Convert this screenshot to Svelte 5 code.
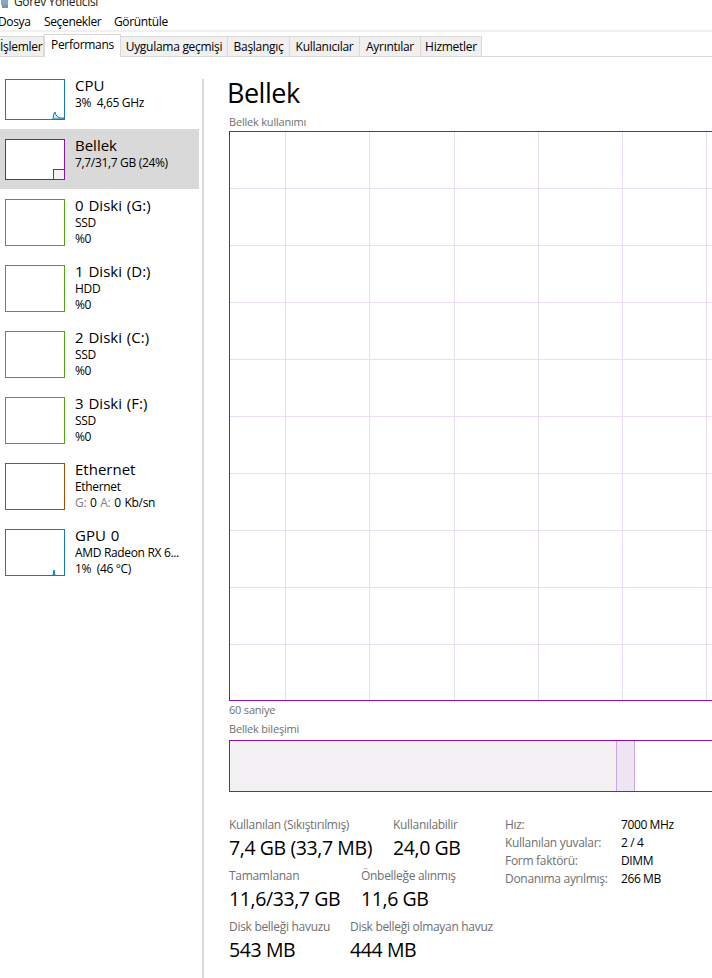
<script>
  const tabs = [
    { label: 'İşlemler', w: 44, first: true },
    { label: 'Performans', w: 77, active: true },
    { label: 'Uygulama geçmişi', w: 107 },
    { label: 'Başlangıç', w: 62 },
    { label: 'Kullanıcılar', w: 70 },
    { label: 'Ayrıntılar', w: 61 },
    { label: 'Hizmetler', w: 61 }
  ];
  const rows = [
    { name: 'CPU', lines: ['3%  4,65 GHz'], color: '#117dbb', kind: 'cpu', h: 'short' },
    { name: 'Bellek', lines: ['7,7/31,7 GB (24%)'], color: '#8b12ae', kind: 'mem', h: 'short', selected: true },
    { name: '0 Diski (G:)', lines: ['SSD', '%0'], color: '#4da60c', h: 'tall' },
    { name: '1 Diski (D:)', lines: ['HDD', '%0'], color: '#4da60c', h: 'tall' },
    { name: '2 Diski (C:)', lines: ['SSD', '%0'], color: '#4da60c', h: 'tall' },
    { name: '3 Diski (F:)', lines: ['SSD', '%0'], color: '#4da60c', h: 'tall' },
    { name: 'Ethernet', lines: ['Ethernet'], net: true, color: '#a74f01', h: 'tall' },
    { name: 'GPU 0', lines: ['AMD Radeon RX 6...', '1%  (46 °C)'], color: '#117dbb', kind: 'gpu', h: 'tall' }
  ];
  const vLines = [56, 140, 225, 309, 393, 477];
  const hLines = [57, 114, 171, 228, 285, 342, 399, 456, 513];
  const specs = [
    ['Hız:', '7000 MHz'],
    ['Kullanılan yuvalar:', '2 / 4'],
    ['Form faktörü:', 'DIMM'],
    ['Donanıma ayrılmış:', '266 MB']
  ];
</script>

<div class="window">
  <div class="titlebar">
    <svg class="appicon" width="8" height="8" viewBox="0 0 8 8"><rect x="0" y="0" width="7" height="5" fill="#7fa8c9"/><rect x="1" y="5" width="6" height="3" fill="#8a8f96"/></svg>
    <span>Görev Yöneticisi</span>
  </div>
  <div class="menu">
    <span class="m1">Dosya</span><span class="m2">Seçenekler</span><span class="m3">Görüntüle</span>
  </div>
  <div class="tabs">
    {#each tabs as t}
      <div class="tab" class:active={t.active} class:first={t.first} style="width:{t.w}px">{t.label}</div>
    {/each}
  </div>
  <div class="content">
    <aside class="side">
      {#each rows as r}
        <div class="row" class:selected={r.selected} class:tall={r.h === 'tall'}>
          <div class="thumb" style="border-color:{r.color}">
            {#if r.kind === 'cpu'}
              <svg class="spark" width="58" height="39" viewBox="0 0 58 39"><path d="M47 39 L48 33 L49 32 L50 35 L52 37 L54 38 L58 38 L58 39 Z" fill="#d2e6f3" stroke="#117dbb" stroke-width="1"/></svg>
            {:else if r.kind === 'mem'}
              <div class="memfill"></div>
            {:else if r.kind === 'gpu'}
              <svg class="spark" width="58" height="45" viewBox="0 0 58 45"><path d="M47 45 L48 40 L49 45 Z" fill="#7db8dc" stroke="#117dbb" stroke-width="1"/></svg>
            {/if}
          </div>
          <div class="info">
            <div class="name">{r.name}</div>
            {#each r.lines as l}<div class="sub">{l}</div>{/each}
            {#if r.net}<div class="sub netline"><span class="grey">G:</span> 0 <span class="grey">A:</span> 0 Kb/sn</div>{/if}
          </div>
        </div>
      {/each}
    </aside>
    <main class="main">
      <h1>Bellek</h1>
      <div class="cap usage">Bellek kullanımı</div>
      <div class="graph">
        <svg width="484" height="568" viewBox="0 0 484 568">
          {#each vLines as x}<line x1={x - 0.5} x2={x - 0.5} y1="0" y2="568" />{/each}
          {#each hLines as y}<line x1="0" x2="484" y1={y - 0.5} y2={y - 0.5} />{/each}
        </svg>
      </div>
      <div class="cap sec">60 saniye</div>
      <div class="cap comp">Bellek bileşimi</div>
      <div class="bar">
        <div class="used"></div>
        <div class="mod"></div>
      </div>
      <div class="stats">
        <div class="left">
          <div class="pair p1">
            <div class="st a"><div class="lb">Kullanılan (Sıkıştırılmış)</div><div class="val">7,4 GB (33,7 MB)</div></div>
            <div class="st"><div class="lb">Kullanılabilir</div><div class="val">24,0 GB</div></div>
          </div>
          <div class="pair p2">
            <div class="st b"><div class="lb">Tamamlanan</div><div class="val">11,6/33,7 GB</div></div>
            <div class="st"><div class="lb">Önbelleğe alınmış</div><div class="val">11,6 GB</div></div>
          </div>
          <div class="pair p3">
            <div class="st c"><div class="lb">Disk belleği havuzu</div><div class="val">543 MB</div></div>
            <div class="st"><div class="lb">Disk belleği olmayan havuz</div><div class="val">444 MB</div></div>
          </div>
        </div>
        <div class="specs">
          {#each specs as s}
            <div class="spec"><span class="k">{s[0]}</span><span class="v">{s[1]}</span></div>
          {/each}
        </div>
      </div>
    </main>
  </div>
</div>

<style>
  :global(body) { margin: 0; background: #fff; }
  .window {
    width: 712px; height: 978px; overflow: hidden; background: #fff; color: #000;
    font-family: "Open Sans", "Noto Sans", sans-serif; font-size: 12px;
  }
  .titlebar { height: 14px; display: flex; gap: 5px; padding-left: 1px; overflow: hidden; }
  .appicon { flex: none; }
  .titlebar span { font-size: 12px; line-height: 16px; margin-top: -6px; color: #222; letter-spacing: -0.35px; }
  .menu {
    height: 16px; line-height: 16px; display: flex; border-bottom: 2px solid #f0f0f0;
    letter-spacing: -0.35px;
  }
  .m1 { margin-left: -2px; width: 46px; }
  .m2 { width: 70px; }
  .tabs {
    margin-top: 2px; height: 23px; display: flex; align-items: flex-end;
    border-bottom: 1px solid #d9d9d9; box-sizing: border-box;
  }
  .tab {
    flex: none; box-sizing: border-box; height: 20px; line-height: 19px; text-align: center;
    background: #f0f0f0; border: 1px solid #d9d9d9; border-left: 0; border-bottom: 0;
    letter-spacing: -0.28px; white-space: nowrap;
  }
  .tab.first { text-align: right; padding-right: 3px; }
  .tab.active {
    height: 23px; background: #fff; line-height: 19px; margin-bottom: -1px; border-left: 1px solid #d9d9d9;
  }
  .content { display: flex; }
  .side { width: 199px; flex: none; padding-top: 22px; height: 921px; box-sizing: border-box; }
  .row { display: flex; height: 60px; box-sizing: border-box; padding: 10px 0 0 5px; gap: 10px; }
  .row.tall { height: 66px; }
  .row:first-child { margin-top: -10px; height: 60px; }
  .row.selected { background: #d9d9d9; }
  .thumb {
    width: 60px; height: 41px; box-sizing: border-box; border: 1px solid; background: #fff;
    position: relative; flex: none; overflow: hidden;
  }
  .tall .thumb { height: 47px; }
  .spark { position: absolute; left: 0; bottom: 0; display: block; }
  .memfill {
    position: absolute; right: 0; bottom: 0; width: 11px; height: 10px; box-sizing: border-box;
    background: #f4f2f4; border: 1px solid #8b12ae; border-right: 0; border-bottom: 0;
  }
  .info { margin-top: -3px; }
  .name { font-size: 15px; line-height: 19px; white-space: nowrap; }
  .tall .name { word-spacing: 1px; }
  .sub { font-size: 12px; line-height: 15.5px; letter-spacing: -0.33px; white-space: pre; }
  .netline { word-spacing: 1px; }
  .grey { color: #808080; }
  .main {
    flex: 1; min-width: 0; margin-left: 3px; border-left: 2px solid #dadada; padding-left: 25px;
    height: 921px; box-sizing: border-box; margin-top: 22px;
  }
  h1 { margin: -5px 0 0 -2px; font-weight: 400; font-size: 27px; line-height: 38px; letter-spacing: -0.5px; }
  .cap { font-size: 11px; line-height: 14px; color: #707070; letter-spacing: -0.2px; }
  .usage { margin-top: 3px; }
  .graph {
    margin-top: 2px; width: 486px; height: 570px; box-sizing: border-box; border: 1px solid #8b12ae;
    border-right: 0;
  }
  .graph svg { display: block; }
  .graph line { stroke: #eadcf1; stroke-width: 1; }
  .sec { margin-top: 2px; }
  .comp { margin-top: 5px; }
  .bar {
    margin-top: 4px; width: 486px; height: 52px; box-sizing: border-box; border: 1px solid #8b12ae;
    border-right: 0; display: flex;
  }
  .used { width: 386px; background: #f3f1f4; border-right: 1px solid #d0a6e0; }
  .mod { width: 17px; background: #eee5f3; border-right: 1px solid #d0a6e0; }
  .stats { display: flex; margin-top: 25px; }
  .left { width: 276px; flex: none; }
  .pair { display: flex; height: 51px; }
  .st.a { width: 164px; }
  .st.b { width: 132px; }
  .st.c { width: 121px; }
  .lb { font-size: 12px; line-height: 16px; color: #707070; letter-spacing: -0.3px; white-space: nowrap; }
  .val { font-size: 19.5px; line-height: 26px; margin-top: 2px; letter-spacing: -0.4px; white-space: nowrap; }
  .spec { display: flex; height: 18px; line-height: 16px; }
  .k { width: 116px; color: #707070; letter-spacing: -0.3px; white-space: nowrap; }
  .v { letter-spacing: -0.4px; white-space: nowrap; }
</style>
